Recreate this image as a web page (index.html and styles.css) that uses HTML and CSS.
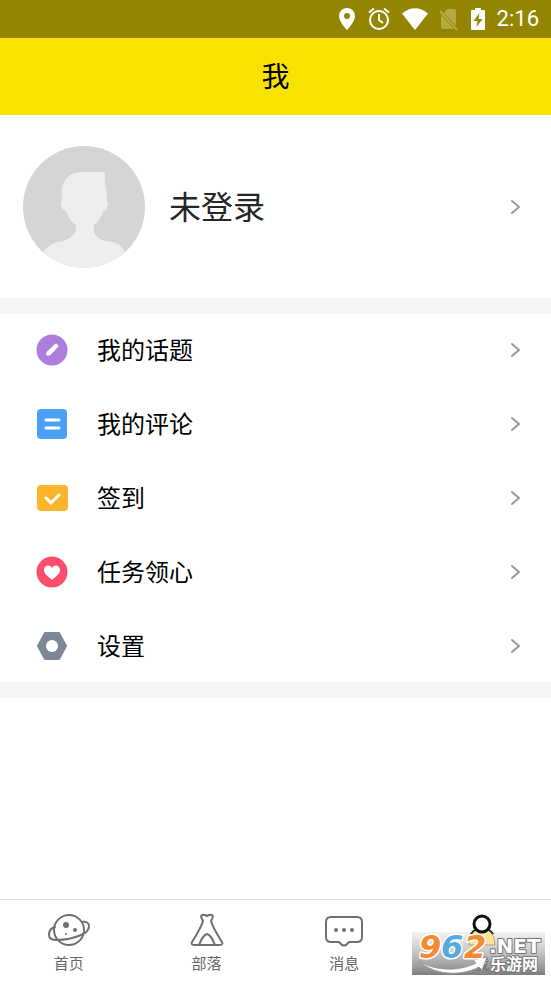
FILE: index.html
```html
<!DOCTYPE html>
<html lang="zh-CN">
<head>
<meta charset="utf-8">
<meta name="viewport" content="width=device-width, initial-scale=1">
<title>我</title>
<link rel="stylesheet" href="styles.css">
</head>
<body>
<div class="status">
  <svg width="20" height="26" viewBox="0 0 20 26"><path fill="#fff" fill-rule="evenodd" d="M10 2a8 8 0 0 0-8 8c0 6 8 14 8 14s8-8 8-14a8 8 0 0 0-8-8zm0 5a3 3 0 1 1 0 6 3 3 0 0 1 0-6z"/></svg>
  <svg width="24" height="26" viewBox="0 0 24 26" fill="none" stroke="#fff" stroke-width="2"><circle cx="12" cy="14" r="9"/><path d="M12 8v6l4 3M2 6.500l5-4M22 6.500l-5-4"/></svg>
  <svg width="28" height="26" viewBox="0 0 28 26"><path fill="#fff" d="M1 7.500Q14-3 27 7.500L14 24z"/></svg>
  <svg width="20" height="26" viewBox="0 0 20 26"><path fill="#b5a945" d="M8 3h7q2 0 2 2v15L5 7zM2 9l13 14H4q-2 0-2-2z"/><path d="M1 5l17 19" stroke="#b5a945" stroke-width="2"/></svg>
  <svg width="18" height="26" viewBox="0 0 18 26"><path fill="#fff" d="M6 2h6v2h3q1 0 1 1v18q0 1-1 1H3q-1 0-1-1V5q0-1 1-1h3z"/><path fill="#948500" d="M10.500 7L4.500 15h4l-1 6 6-8h-4z"/></svg>
  <span class="clock">2:16</span>
</div>
<header class="title"><h1>我</h1></header>
<main>
  <a class="profile" href="#login">
    <svg class="avatar" viewBox="0 0 122 122"><defs><clipPath id="disc"><circle cx="61" cy="61" r="61"/></clipPath></defs><g clip-path="url(#disc)"><path fill="#d5d5d5" d="M0 0h122v122H0z"/><path fill="#eee" d="M39 53C37 35 45 26 60 26H79Q82 26 82 30C81 37 84 42 84 56Q86 58 84 62Q83 65 80 65Q78 73 71 79V86C74 94 82 95 89 96C98 98 102 104 104 112V122H18V112C20 104 26 98 35 96C43 95 51 91 53 84V79Q46 74 43 65Q40 65 39 61Q37 58 39 53z"/></g></svg>
    <span class="name">未登录</span>
    <svg class="chevron" viewBox="0 0 12 16"><path d="M2 2l7 6-7 6"/></svg>
  </a>
  <nav class="list" aria-label="我的">
    <a href="#topics">
      <svg class="icon" viewBox="0 0 32 32"><circle cx="16" cy="16" r="15.500" fill="#ac7ddd"/><path d="M11 20.500l.5-2L20 10.500l1.500 1.500-8 8.500z" fill="#fff" stroke="#fff" stroke-width="2" stroke-linejoin="round"/></svg>
      <span>我的话题</span><svg class="chevron" viewBox="0 0 12 16"><path d="M2 2l7 6-7 6"/></svg>
    </a>
    <a href="#comments">
      <svg class="icon" viewBox="0 0 32 32"><rect x="1" y="1" width="30" height="30" rx="4" fill="#499ff6"/><path d="M10 12h13M10 20h13" stroke="#fff" stroke-width="3" stroke-linecap="round"/></svg>
      <span>我的评论</span><svg class="chevron" viewBox="0 0 12 16"><path d="M2 2l7 6-7 6"/></svg>
    </a>
    <a href="#checkin">
      <svg class="icon" viewBox="0 0 32 32"><rect x="1" y="3" width="31" height="26" rx="4" fill="#fbb42b"/><path d="M10 16l5 5 8-8" fill="none" stroke="#fff" stroke-width="3" stroke-linecap="round"/></svg>
      <span>签到</span><svg class="chevron" viewBox="0 0 12 16"><path d="M2 2l7 6-7 6"/></svg>
    </a>
    <a href="#tasks">
      <svg class="icon" viewBox="0 0 32 32"><circle cx="16" cy="16" r="15.500" fill="#fb4e6d"/><path d="M16 12C14 8 8 9 8 14c0 4 4 6 7 9q1 1 2 0c3-3 7-5 7-9 0-5-6-6-8-2z" fill="#fff"/></svg>
      <span>任务领心</span><svg class="chevron" viewBox="0 0 12 16"><path d="M2 2l7 6-7 6"/></svg>
    </a>
    <a href="#settings">
      <svg class="icon" viewBox="0 0 32 32"><path d="M9 3h14l7 13-7 13H9L2 16z" fill="#7c8896" stroke="#7c8896" stroke-width="2" stroke-linejoin="round"/><circle cx="16" cy="16" r="6" fill="#fff"/></svg>
      <span>设置</span><svg class="chevron" viewBox="0 0 12 16"><path d="M2 2l7 6-7 6"/></svg>
    </a>
  </nav>
</main>
<nav class="tabs" aria-label="主导航">
  <a href="#home">
    <svg viewBox="0 0 44 36"><circle cx="22" cy="18" r="15"/><path d="M35 10c4-1 7 1 7 4 0 4-3 7-8 9-7 3-16 5-24 5-5 0-8-2-8-5 0-4 2-7 6-8"/><g class="solid"><circle cx="19" cy="13" r="3"/><circle cx="28" cy="18" r="2"/><circle cx="19" cy="22" r="1"/></g></svg>
    <span>首页</span>
  </a>
  <a href="#tribe">
    <svg viewBox="0 0 44 36"><path d="M18 9l-1-2c-2-3 0-5 3-4l2 1 2-1c3-1 5 1 3 4l-1 2c2 7 6 13 11 21 1 2 0 3-2 3H9c-2 0-3-1-2-3C12 22 16 16 18 9zM14 33c2-5 4-10 8-11 4 1 6 6 8 11"/></svg>
    <span>部落</span>
  </a>
  <a href="#messages">
    <svg viewBox="0 0 44 36"><path d="M9 5h26q5 0 5 5v15q0 5-5 5h-8l-3 3q-2 1-4 0l-3-3H9q-5 0-5-5V10q0-5 5-5z"/><g class="solid"><circle cx="14" cy="18" r="2"/><circle cx="22" cy="18" r="2"/><circle cx="30" cy="18" r="2"/></g></svg>
    <span>消息</span>
  </a>
  <a class="current" href="#me" aria-current="page">
    <svg viewBox="0 0 44 36"><path class="body" d="M15 18c-5 3-6 8-5 13q1 3 4 3h16q3 0 4-3c1-5 0-10-5-13z"/><circle class="head" cx="22" cy="12" r="8"/></svg>
    <span>我</span>
  </a>
</nav>
<svg class="mark" viewBox="0 0 133 43" role="img" aria-label="962.NET 乐游网">
  <defs><linearGradient id="shade" x1="0" y1="0" x2="0" y2="1"><stop offset="0" stop-color="#aaa" stop-opacity=".15"/><stop offset=".5" stop-color="#999" stop-opacity=".6"/><stop offset="1" stop-color="#777" stop-opacity=".95"/></linearGradient></defs>
  <path fill="url(#shade)" d="M0 0h133v43H0z"/>
  <path fill="#ffe39a" stroke="#b3a176" stroke-width="1" d="M61 0h18q4 5 4 13H57q0-8 4-13z"/>
  <path fill="#fff" stroke="#999" stroke-width="1" d="M7 29C25 40 48 39 64 31L61 28 75 25 70 38 67 35C48 45 22 43 7 29z"/>
  <g class="digits"><text x="7" y="26" fill="#f58a35">9</text><text x="29" y="26" fill="#59a9df">6</text><text x="52" y="26" fill="#f58a35">2</text></g>
  <text class="net" x="77" y="21">.NET</text>
  <text class="site" x="78" y="38">乐游网</text>
</svg>
</body>
</html>
```

FILE: styles.css
```css
* { box-sizing: border-box; }
body {
  margin: 0;
  min-height: 100vh;
  display: flex;
  flex-direction: column;
  position: relative;
  background: #fff;
  color: #000;
  font-family: "Noto Sans CJK SC", sans-serif;
}
a { color: inherit; text-decoration: none; }
svg { display: block; flex: none; }
.status {
  height: 38px;
  padding-right: 12px;
  display: flex;
  align-items: center;
  justify-content: flex-end;
  gap: 10px;
  background: #948500;
}
.clock {
  color: #fff;
  font: 400 22px/26px Roboto, sans-serif;
}
.title {
  height: 77px;
  padding-bottom: 3px;
  display: flex;
  align-items: center;
  justify-content: center;
  background: #f9e200;
}
h1 { margin: 0; font-size: 28px; font-weight: 400; line-height: 40px; }
main { flex: 1; }
.profile {
  display: flex;
  align-items: center;
  gap: 24px;
  padding: 31px 29px 30px 23px;
  border-bottom: 16px solid #f6f6f6;
}
.avatar { width: 122px; height: 122px; }
.name { flex: 1; padding-bottom: 4px; font-size: 32px; line-height: 48px; color: #262626; }
.chevron {
  width: 12px;
  height: 16px;
  fill: none;
  stroke: #999;
  stroke-width: 2;
  stroke-linecap: round;
  stroke-linejoin: round;
}
.list {
  display: flex;
  flex-direction: column;
  gap: 2px;
  border-bottom: 16px solid #f6f6f6;
}
.list a {
  height: 72px;
  display: flex;
  align-items: center;
  gap: 29px;
  padding: 0 29px 0 36px;
}
.list span { flex: 1; padding-bottom: 2px; font-size: 24px; line-height: 36px; }
.icon { width: 32px; height: 32px; }
.tabs {
  height: 82px;
  display: grid;
  grid-template-columns: repeat(4, 1fr);
  border-top: 1px solid #e4e4e4;
}
.tabs a {
  display: flex;
  flex-direction: column;
  align-items: center;
  gap: 3px;
  padding-top: 12px;
  color: #666;
  font-size: 15px;
  line-height: 24px;
}
.tabs svg {
  width: 44px;
  height: 36px;
  fill: none;
  stroke: #707070;
  stroke-width: 2;
  stroke-linejoin: round;
  stroke-linecap: round;
}
.tabs .solid { fill: #707070; stroke: none; }
.tabs .current { color: #111; }
.tabs .body { fill: #ffe39a; stroke: #222; }
.tabs .head { fill: #fff; stroke: #111; stroke-width: 3; }
.tabs .current svg { position: relative; z-index: 2; clip-path: inset(0 0 14px 0); }
.mark {
  position: absolute;
  right: 6px;
  bottom: 6px;
  width: 133px;
  height: 43px;
  overflow: visible;
}
.mark text { paint-order: stroke; stroke-linejoin: round; }
.digits text {
  font: italic bold 32px "DejaVu Sans", sans-serif;
  stroke: #fff;
  stroke-width: 3;
}
.net, .site { fill: #fff; stroke: #777; stroke-width: 2; }
.net { font: bold 20px "DejaVu Sans", sans-serif; }
.site { font: bold 16px "Noto Sans CJK SC", sans-serif; }
```
